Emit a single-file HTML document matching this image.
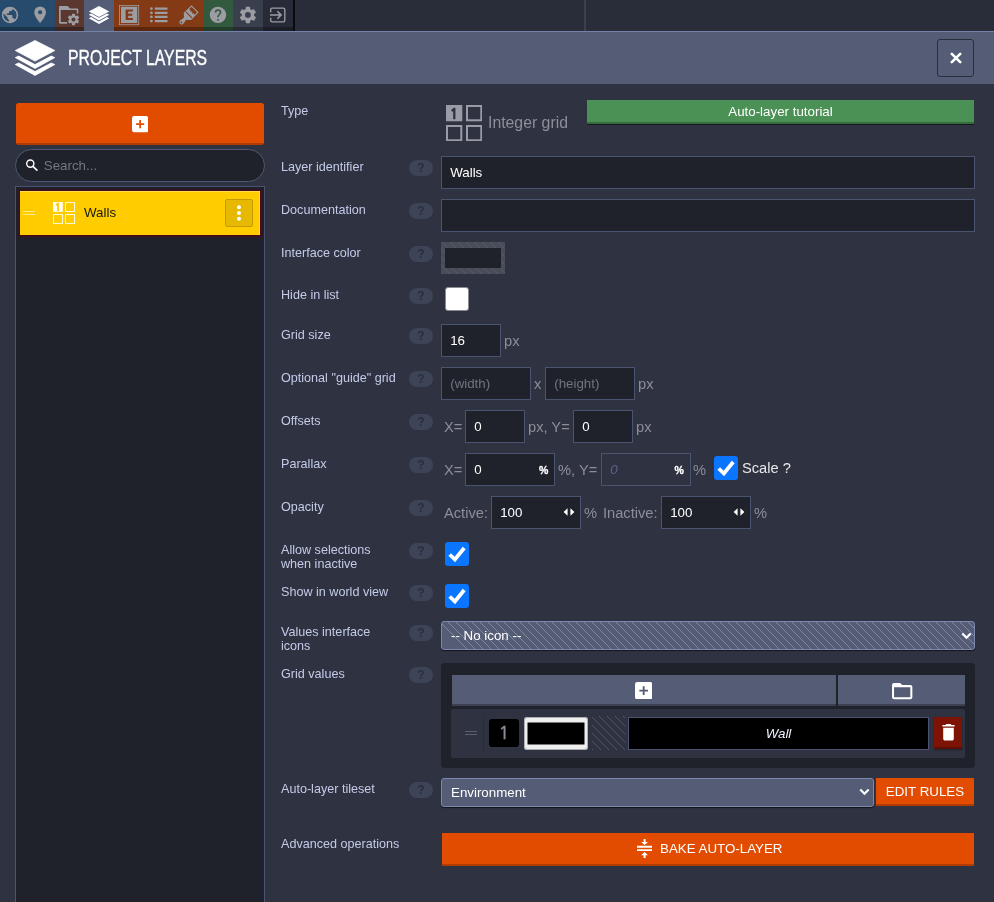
<!DOCTYPE html>
<html lang="en">
<head>
<meta charset="utf-8">
<title>Project layers</title>
<style>
*{box-sizing:border-box;margin:0;padding:0}
html,body{width:994px;height:902px;overflow:hidden;background:#2f3240;font-family:"Liberation Sans",sans-serif;font-size:13px;color:#c3cbe8}
.abs,.abs>*{position:absolute}
#root{position:relative;width:994px;height:902px;overflow:hidden;will-change:transform}
#root>*{position:absolute}

/* top bar */
#bar{left:0;top:0;width:994px;height:31px;background:#292c39}
#bar .b{position:absolute;top:0;height:31px;border-bottom:4px solid rgba(0,0,0,.3)}
#bar .b.on{border-bottom:none;background:#555c75}

/* header */
#head{left:0;top:31px;width:994px;height:53px;background:#555c75;border-top:1px solid #7381ab}
#title{left:68px;top:42.6px;font-size:22.6px;line-height:30px;color:#fff;white-space:nowrap;transform-origin:0 50%;transform:scaleX(.70);-webkit-text-stroke:.35px #fff}
#close{left:937px;top:39px;width:37px;height:38px;border:1px solid #2b2e3b;border-radius:3px;background:#555c75}

/* left */
.obtn{background:#e24c00;border-bottom:2px solid #b23b00;border-radius:2.5px;color:#fff;text-align:center}
#search{left:15px;top:149px;width:250px;height:33px;border:1px solid #4f5875;border-radius:17px;background:#1f222b}
#search span{position:absolute;left:27.8px;top:8px;font-size:13.33px;line-height:16px;color:#76777c}
#list{left:15px;top:186px;width:250px;height:730px;border:1px solid #4a5370;background:#1f222b}
#item{left:20px;top:191px;width:240px;height:44px;background:#ffcc00;box-shadow:inset -1px 1px 0 #ffdf50,0 0 0 1px #4a0815,0 0 2.5px 1.5px rgba(80,8,20,.7)}
#item .nm{position:absolute;left:64px;top:14px;font-size:13.33px;line-height:16px;color:#15161a}
#menu{position:absolute;left:205px;top:8px;width:28px;height:28px;background:#e6b800;border:1px solid #c39c00;border-radius:2px}

/* form */
.lbl{left:281px;font-size:12.6px;line-height:14px;color:#c3cbe8;white-space:nowrap}
.q{left:409px;width:24px;height:16px;border-radius:8px;background:#3e4457;color:#2b2e3b;font-weight:bold;font-size:12px;line-height:16px;text-align:center}
.in{height:33px;background:#1f222b;border:1px solid #4a5370;color:#fff;font-size:13.33px;line-height:31px;padding-left:8.2px;white-space:nowrap}
.in.ph{color:#71747d}
.u{font-size:14.67px;line-height:18px;color:#8c8f99;white-space:nowrap}
.cb{width:24px;height:24px;border-radius:3px;background:#0a75ff}
.cb svg{position:absolute;left:0;top:0;width:24px;height:24px}
.stripe{background-image:repeating-linear-gradient(45deg,rgba(255,255,255,.27) 0,rgba(255,255,255,.27) .7px,transparent .7px,transparent 5.66px)}
.sel{height:29px;border:1px solid #7c88b1;border-radius:3px;background-color:#555c75;color:#fff;font-size:13.33px;line-height:27px;padding-left:9px;box-shadow:0 1px 1px rgba(0,0,0,.6)}
.gbtn{background:#555c75;border-bottom:2px solid #3b4053;height:31px}
</style>
</head>
<body>
<div id="root">

<!-- TOP BAR -->
<div id="bar">
  <div class="b" style="left:0;width:55px;background:#264b6d"></div>
  <div class="b" style="left:55px;width:29px;background:#5a382f"></div>
  <div class="b on" style="left:84px;width:30px"></div>
  <div class="b" style="left:114px;width:90px;background:#833a15"></div>
  <div class="b" style="left:204px;width:29px;background:#325a3e"></div>
  <div class="b" style="left:233px;width:30px;background:#3a3f4e"></div>
  <div class="b" style="left:263px;width:30px;background:#282b37"></div>
  <div style="position:absolute;left:293px;top:0;width:2px;height:31px;background:#0a0a0d"></div>
  <div style="position:absolute;left:584px;top:0;width:2px;height:31px;background:#3c404e"></div>
  <svg style="position:absolute;left:0;top:0;width:300px;height:31px" viewBox="0 0 300 31" fill="#9b9da3">
    <path transform="translate(0.15,5.20) scale(0.8208)" d="M17.9,17.39C17.64,16.59 16.89,16 16,16H15V13A1,1 0 0,0 14,12H8V10H10A1,1 0 0,0 11,9V7H13A2,2 0 0,0 15,5V4.59C17.93,5.77 20,8.64 20,12C20,14.08 19.2,15.97 17.9,17.39M11,19.93C7.05,19.44 4,16.08 4,12C4,11.38 4.08,10.78 4.21,10.21L9,15V16A2,2 0 0,0 11,18M12,2A10,10 0 0,0 2,12A10,10 0 0,0 12,22A10,10 0 0,0 22,12A10,10 0 0,0 12,2Z"/>
    <path transform="translate(30.05,4.70) scale(0.8375)" d="M12,11.5A2.5,2.5 0 0,1 9.5,9A2.5,2.5 0 0,1 12,6.5A2.5,2.5 0 0,1 14.5,9A2.5,2.5 0 0,1 12,11.5M12,2A7,7 0 0,0 5,9C5,14.25 12,22 12,22C12,22 19,14.25 19,9A7,7 0 0,0 12,2Z"/>
    <!-- folder + cog -->
    <path d="M59,7.1C59,6.4 59.5,5.9 60.2,5.9H66.9C67.3,5.9 67.6,6.05 67.9,6.35L70.1,8.6H77.1C77.8,8.6 78.3,9.1 78.3,9.8V13.4H76.7V10.1H60.7V22.1H67.1V23.7H60.2C59.5,23.7 59,23.2 59,22.5Z"/>
    <path transform="translate(66.60,12.55) scale(0.5750)" d="M12,15.5A3.5,3.5 0 0,1 8.5,12A3.5,3.5 0 0,1 12,8.5A3.5,3.5 0 0,1 15.5,12A3.5,3.5 0 0,1 12,15.5M19.43,12.97C19.47,12.65 19.5,12.33 19.5,12C19.5,11.67 19.47,11.34 19.43,11L21.54,9.37C21.73,9.22 21.78,8.95 21.66,8.73L19.66,5.27C19.54,5.05 19.27,4.96 19.05,5.05L16.56,6.05C16.04,5.66 15.5,5.32 14.87,5.07L14.5,2.42C14.46,2.18 14.25,2 14,2H10C9.75,2 9.54,2.18 9.5,2.42L9.13,5.07C8.5,5.32 7.96,5.66 7.44,6.05L4.95,5.05C4.73,4.96 4.46,5.05 4.34,5.27L2.34,8.73C2.21,8.95 2.27,9.22 2.46,9.37L4.57,11C4.53,11.34 4.5,11.67 4.5,12C4.5,12.33 4.53,12.65 4.57,12.97L2.46,14.63C2.27,14.78 2.21,15.05 2.34,15.27L4.34,18.73C4.46,18.95 4.73,19.03 4.95,18.95L7.44,17.94C7.96,18.34 8.5,18.68 9.13,18.93L9.5,21.58C9.54,21.82 9.75,22 10,22H14C14.25,22 14.46,21.82 14.5,21.58L14.87,18.93C15.5,18.67 16.04,18.34 16.56,17.94L19.05,18.95C19.27,19.03 19.54,18.95 19.66,18.73L21.66,15.27C21.78,15.05 21.73,14.78 21.54,14.63L19.43,12.97Z"/>
    <!-- layers (active) -->
    <path fill="#fff" d="M99,5.9L109.3,11.5L99,17.1L88.8,11.5Z M88.8,14.75L91.1,13.5L99,17.85L106.9,13.5L109.3,14.75L99,20.45Z M88.8,18.3L91.1,17.05L99,21.4L106.9,17.05L109.3,18.3L99,24Z"/>
    <!-- entity box -->
    <rect x="119.4" y="5.4" width="19.3" height="19.3" fill="none" stroke="#9b9da3" stroke-width=".8"/>
    <path fill-rule="evenodd" d="M121,6.8H137.2V23.1H121Z M125.6,9.5V20.1H132.9V18H128.2V15.8H132.2V13.7H128.2V11.6H132.9V9.5Z"/>
    <!-- list -->
    <path d="M154.8,7.45H167.5V9.75H154.8Z M154.8,11.65H167.5V13.95H154.8Z M154.8,15.8H167.5V18.1H154.8Z M154.8,19.95H167.5V22.25H154.8Z"/>
    <circle cx="151.4" cy="8.6" r="1.4"/><circle cx="151.4" cy="12.8" r="1.4"/><circle cx="151.4" cy="16.95" r="1.4"/><circle cx="151.4" cy="21.1" r="1.4"/>
    <!-- brush -->
    <g transform="translate(195.05,8.8) rotate(45)">
      <path fill-rule="evenodd" d="M-5.05,0H5.05V10.3C5.05,12.2 1.6,12.4 1.6,14.6L2.35,18.9A2.35,2.35 0 0,1 -2.35,18.9L-1.6,14.6C-1.6,12.4 -5.05,12.2 -5.05,10.3Z M-3.9,1.15V4.9L-2.6,3.9L-1.3,5.3L0,3.9L1.3,5.3L2.6,3.9L3.9,4.9V1.15Z M-3.8,8.1H3.8A.55,.55 0 0,1 3.8,9.2H-3.8A.55,.55 0 0,1 -3.8,8.1Z M0,18.3A.95,.95 0 0,0 0,20.2A.95,.95 0 0,0 0,18.3Z"/>
    </g>
    <path transform="translate(208.15,5.05) scale(0.8208)" d="M15.07,11.25L14.17,12.17C13.45,12.89 13,13.5 13,15H11V14.5C11,13.39 11.45,12.39 12.17,11.67L13.41,10.41C13.78,10.05 14,9.55 14,9C14,7.89 13.1,7 12,7A2,2 0 0,0 10,9H8A4,4 0 0,1 12,5A4,4 0 0,1 16,9C16,9.88 15.64,10.67 15.07,11.25M13,19H11V17H13M12,2A10,10 0 0,0 2,12A10,10 0 0,0 12,22A10,10 0 0,0 22,12C22,6.47 17.5,2 12,2Z"/>
    <path transform="translate(238.05,5.10) scale(0.8208)" d="M12,15.5A3.5,3.5 0 0,1 8.5,12A3.5,3.5 0 0,1 12,8.5A3.5,3.5 0 0,1 15.5,12A3.5,3.5 0 0,1 12,15.5M19.43,12.97C19.47,12.65 19.5,12.33 19.5,12C19.5,11.67 19.47,11.34 19.43,11L21.54,9.37C21.73,9.22 21.78,8.95 21.66,8.73L19.66,5.27C19.54,5.05 19.27,4.96 19.05,5.05L16.56,6.05C16.04,5.66 15.5,5.32 14.87,5.07L14.5,2.42C14.46,2.18 14.25,2 14,2H10C9.75,2 9.54,2.18 9.5,2.42L9.13,5.07C8.5,5.32 7.96,5.66 7.44,6.05L4.95,5.05C4.73,4.96 4.46,5.05 4.34,5.27L2.34,8.73C2.21,8.95 2.27,9.22 2.46,9.37L4.57,11C4.53,11.34 4.5,11.67 4.5,12C4.5,12.33 4.53,12.65 4.57,12.97L2.46,14.63C2.27,14.78 2.21,15.05 2.34,15.27L4.34,18.73C4.46,18.95 4.73,19.03 4.95,18.95L7.44,17.94C7.96,18.34 8.5,18.68 9.13,18.93L9.5,21.58C9.54,21.82 9.75,22 10,22H14C14.25,22 14.46,21.82 14.5,21.58L14.87,18.93C15.5,18.67 16.04,18.34 16.56,17.94L19.05,18.95C19.27,19.03 19.54,18.95 19.66,18.73L21.66,15.27C21.78,15.05 21.73,14.78 21.54,14.63L19.43,12.97Z"/>
    <!-- exit -->
    <path fill="none" stroke="#9b9da3" stroke-width="1.35" d="M270.7,12.2V9.4C270.7,8.6 271.3,8.05 272.1,8.05H283.4C284.2,8.05 284.8,8.6 284.8,9.4V20.5C284.8,21.3 284.2,21.85 283.4,21.85H272.1C271.3,21.85 270.7,21.3 270.7,20.5V17.7"/>
    <path fill="none" stroke="#9b9da3" stroke-width="1.6" d="M270,14.95H280.8M277.3,11.2L281.1,14.95L277.3,18.7"/>
  </svg>
</div>

<!-- HEADER -->
<div id="head"></div>
<svg style="left:14px;top:39px;width:42px;height:38px" viewBox="0 0 42 38"><path fill="#fff" stroke="#fff" stroke-width=".8" stroke-linejoin="round" d="M21,1.5 L40.8,11.5 L21,22.1 L1.3,11.5Z M4.8,17.1 L21,25.6 L37.2,17.1 L40.8,18.6 L21,29.4 L1.3,18.6Z M4.8,24 L21,32.5 L37.2,24 L40.8,25.5 L21,36.4 L1.3,25.5Z"/></svg>
<div id="title">PROJECT LAYERS</div>
<div id="close"><svg style="position:absolute;left:11.5px;top:12px;width:12px;height:12px" viewBox="0 0 12 12"><path d="M1.8,1.8L10.2,10.2M10.2,1.8L1.8,10.2" stroke="#fff" stroke-width="2.6" stroke-linecap="round"/></svg></div>

<!-- LEFT PANEL -->
<div class="obtn" style="left:16px;top:103px;width:248px;height:42px"><svg style="position:absolute;left:116px;top:13.4px;width:16.3px;height:16.3px" viewBox="0 0 16 16"><rect width="16" height="16" rx="2.2" fill="#fff"/><path d="M8,4V12M4,8H12" stroke="#e24c00" stroke-width="1.7"/></svg></div>
<div id="search"><svg style="position:absolute;left:9px;top:9px;width:13px;height:13px" viewBox="0 0 13 13"><circle cx="5.3" cy="4.6" r="3.6" fill="none" stroke="#fff" stroke-width="1.4"/><path d="M8,7.4L11.9,11.1" stroke="#fff" stroke-width="1.6" stroke-linecap="round"/></svg><span>Search...</span></div>
<div id="list"></div>
<div id="item">
  <div style="position:absolute;left:3px;top:19.5px;width:12px;height:1.2px;background:#ffe88a"></div>
  <div style="position:absolute;left:3px;top:23.3px;width:12px;height:1.2px;background:#ffe88a"></div>
  <svg style="position:absolute;left:33px;top:11px;width:22px;height:22px" viewBox="0 0 22 22"><rect x="0" y="0" width="9.8" height="9.8" fill="#fffdf2"/><text x="4.8" y="9" font-family="NanumGothic, Liberation Sans, sans-serif" font-size="9.6" font-weight="bold" text-anchor="middle" fill="#ffc800" stroke="#ffc800" stroke-width=".6">1</text><g fill="none" stroke="#fff8d6" stroke-width="1"><rect x="12.5" y=".5" width="9" height="9"/><rect x=".5" y="12.5" width="9" height="9"/><rect x="12.5" y="12.5" width="9" height="9"/></g></svg>
  <div class="nm">Walls</div>
  <div id="menu"><svg style="position:absolute;left:0;top:0;width:26px;height:26px" viewBox="0 0 26 26" fill="#fff"><circle cx="13" cy="7.3" r="2"/><circle cx="13" cy="13" r="2"/><circle cx="13" cy="18.8" r="2"/></svg></div>
</div>

<!-- FORM -->
<div class="lbl" style="top:104px">Type</div>
<svg style="left:445.9px;top:104.8px;width:36.3px;height:36.3px" viewBox="0 0 36.3 36.3"><rect x="0" y="0" width="16.3" height="16.3" fill="#9a9ca5"/><text x="8.1" y="13.6" font-family="NanumGothic, Liberation Sans, sans-serif" font-size="14" font-weight="bold" text-anchor="middle" fill="#2f3240" stroke="#2f3240" stroke-width=".7">1</text><g fill="none" stroke="#9a9ca5" stroke-width="2"><rect x="21" y="1" width="14.3" height="14.3"/><rect x="1" y="21" width="14.3" height="14.3"/><rect x="21" y="21" width="14.3" height="14.3"/></g></svg>
<div style="left:488px;top:113.2px;font-size:17px;line-height:20px;color:#8c8f99;white-space:nowrap;transform-origin:0 50%;transform:scaleX(.93)">Integer grid</div>
<div style="left:587px;top:100px;width:387px;height:23.5px;background:#4b9156;border-bottom:2px solid #356b3e;box-shadow:0 1px 0 #15171d;color:#fff;font-size:13.33px;line-height:23px;text-align:center">Auto-layer tutorial</div>

<div class="lbl" style="top:160px">Layer identifier</div><div class="q" style="top:160px">?</div>
<div class="in" style="left:441px;top:156px;width:534px">Walls</div>

<div class="lbl" style="top:203px">Documentation</div><div class="q" style="top:203px">?</div>
<div class="in" style="left:441px;top:199px;width:534px"></div>

<div class="lbl" style="top:246px">Interface color</div><div class="q" style="top:246px">?</div>
<div style="left:441px;top:242px;width:64px;height:32px;background-color:#494d5a;background-image:repeating-linear-gradient(45deg,rgba(255,255,255,.08) 0,rgba(255,255,255,.08) .9px,transparent .9px,transparent 5.66px)"></div>
<div style="left:445px;top:248px;width:56px;height:20px;background:#1f222b"></div>

<div class="lbl" style="top:288px">Hide in list</div><div class="q" style="top:288px">?</div>
<div style="left:445px;top:287px;width:24px;height:24px;background:#fff;border:1px solid #8a8c92;border-radius:3px"></div>

<div class="lbl" style="top:328px">Grid size</div><div class="q" style="top:328px">?</div>
<div class="in" style="left:441px;top:324px;width:60px">16</div>
<div class="u" style="left:504px;top:332px">px</div>

<div class="lbl" style="top:371px">Optional "guide" grid</div><div class="q" style="top:371px">?</div>
<div class="in ph" style="left:441px;top:367px;width:90px">(width)</div>
<div class="u" style="left:534px;top:375px">x</div>
<div class="in ph" style="left:545px;top:367px;width:90px">(height)</div>
<div class="u" style="left:638px;top:375px">px</div>

<div class="lbl" style="top:414px">Offsets</div><div class="q" style="top:414px">?</div>
<div class="u" style="left:444px;top:418px">X=</div>
<div class="in" style="left:465px;top:410px;width:60px">0</div>
<div class="u" style="left:528px;top:418px">px, Y=</div>
<div class="in" style="left:573px;top:410px;width:60px">0</div>
<div class="u" style="left:636px;top:418px">px</div>

<div class="lbl" style="top:457px">Parallax</div><div class="q" style="top:457px">?</div>
<div class="u" style="left:444px;top:461px">X=</div>
<div class="in" style="left:465px;top:453px;width:90px">0<span style="position:absolute;left:73px;top:.5px;font-size:10.5px;font-weight:bold;-webkit-text-stroke:.3px #fff">%</span></div>
<div class="u" style="left:558px;top:461px">%, Y=</div>
<div class="in" style="left:601px;top:453px;width:90px;background:transparent;color:#59638a;font-style:italic">0<span style="position:absolute;left:72.5px;top:.5px;font-size:10.5px;font-weight:bold;font-style:normal;color:#fff;-webkit-text-stroke:.3px #fff">%</span></div>
<div class="u" style="left:693px;top:461px">%</div>
<div class="cb" style="left:714px;top:456px"><svg viewBox="0 0 24 24"><path d="M4.7,12.5L9.9,17.5L19.2,6" fill="none" stroke="#fff" stroke-width="3.8"/></svg></div>
<div style="left:742px;top:459px;font-size:14.67px;line-height:18px;color:#e8e8ea;white-space:nowrap">Scale ?</div>

<div class="lbl" style="top:500px">Opacity</div><div class="q" style="top:500px">?</div>
<div class="u" style="left:444px;top:504px">Active:</div>
<div class="in" style="left:491px;top:496px;width:90px">100<svg style="position:absolute;left:71.4px;top:11.4px;width:12px;height:8px" viewBox="0 0 12 8" fill="#fff"><path d="M4.6,.2V7.8L.6,4Z M7.4,.2V7.8L11.4,4Z"/></svg></div>
<div class="u" style="left:584px;top:504px">%</div>
<div class="u" style="left:603px;top:504px">Inactive:</div>
<div class="in" style="left:661px;top:496px;width:90px">100<svg style="position:absolute;left:71.4px;top:11.4px;width:12px;height:8px" viewBox="0 0 12 8" fill="#fff"><path d="M4.6,.2V7.8L.6,4Z M7.4,.2V7.8L11.4,4Z"/></svg></div>
<div class="u" style="left:754px;top:504px">%</div>

<div class="lbl" style="top:543px">Allow selections<br>when inactive</div><div class="q" style="top:543px">?</div>
<div class="cb" style="left:445px;top:542px"><svg viewBox="0 0 24 24"><path d="M4.7,12.5L9.9,17.5L19.2,6" fill="none" stroke="#fff" stroke-width="3.8"/></svg></div>

<div class="lbl" style="top:585px">Show in world view</div><div class="q" style="top:585px">?</div>
<div class="cb" style="left:445px;top:584px"><svg viewBox="0 0 24 24"><path d="M4.7,12.5L9.9,17.5L19.2,6" fill="none" stroke="#fff" stroke-width="3.8"/></svg></div>

<div class="lbl" style="top:625px">Values interface<br>icons</div><div class="q" style="top:625px">?</div>
<div class="sel stripe" style="left:441px;top:621px;width:534px">-- No icon --<svg style="position:absolute;left:518.6px;top:9.5px;width:11px;height:8px" viewBox="0 0 11 8"><path d="M1.3,1.5L5.5,5.8L9.7,1.5" fill="none" stroke="#fff" stroke-width="2.2"/></svg></div>

<div class="lbl" style="top:667px">Grid values</div><div class="q" style="top:667px">?</div>
<div style="left:441px;top:663px;width:534px;height:105px;background:#1f222b;border-radius:4px"></div>
<div class="gbtn" style="left:452px;top:675px;width:384px"><svg style="position:absolute;left:183px;top:6.9px;width:17.4px;height:17.4px" viewBox="0 0 16 16"><rect width="16" height="16" rx="2.2" fill="#fff"/><path d="M8,4V12M4,8H12" stroke="#555c75" stroke-width="1.7"/></svg></div>
<div class="gbtn" style="left:838px;top:675px;width:127px"><svg style="position:absolute;left:51.6px;top:3.9px;width:24.4px;height:24.4px" viewBox="0 0 24 24" fill="#fff"><path d="M20,18H4V8H20M20,6H12L10,4H4C2.89,4 2,4.89 2,6V18A2,2 0 0,0 4,20H20A2,2 0 0,0 22,18V8C22,6.89 21.1,6 20,6Z"/></svg></div>
<div style="left:451px;top:709px;width:514px;height:48.5px;background:#2f3240;border-radius:2px"></div>
<div style="left:465px;top:730.7px;width:12px;height:1.2px;background:#5a5f70"></div>
<div style="left:465px;top:734.3px;width:12px;height:1.2px;background:#5a5f70"></div>
<div style="left:483px;top:714px;width:1px;height:38px;background:#2a2d39"></div>
<div style="left:489px;top:719px;width:30px;height:28px;background:#000;border-radius:3px;color:#8a8d96;font-family:NanumGothic,'Liberation Sans',sans-serif;font-size:18px;line-height:29px;-webkit-text-stroke:.55px #8a8d96;text-align:center">1</div>
<div style="left:524px;top:717px;width:64px;height:33px;background:#000;border:solid #efefef;border-width:5px 3px;box-shadow:inset 0 0 0 .5px #efefef;outline:1px solid rgba(120,122,130,.55);outline-offset:-1px;border-radius:3px"></div>
<div style="left:592px;top:716px;width:33px;height:34px;background-image:repeating-linear-gradient(45deg,#50556400 0,#505564 .1px,#505564 1px,transparent 1.1px,transparent 5.66px)"></div>
<div class="in" style="left:628px;top:717px;width:301px;background:#000;text-align:center;padding-left:0;font-style:italic;color:#eef1ff">Wall</div>
<div style="left:934px;top:717px;width:28px;height:32px;background:#7d1305;border-bottom:2px solid #5c0d04;box-shadow:0 1px 2px rgba(0,0,0,.35)"><svg style="position:absolute;left:7.6px;top:7.3px;width:13px;height:17px" viewBox="0 0 13 17" fill="#fff"><path d="M4.3,0H8.7L9.4,.9H12.6V2.6H.4V.9H3.6Z M1.2,3.8H11.8V14.8C11.8,15.9 11,16.6 10,16.6H3C2,16.6 1.2,15.9 1.2,14.8Z"/></svg></div>

<div class="lbl" style="top:782px">Auto-layer tileset</div><div class="q" style="top:782px">?</div>
<div class="sel" style="left:441px;top:778px;width:433px">Environment<svg style="position:absolute;left:417.3px;top:8.8px;width:11px;height:8px" viewBox="0 0 11 8"><path d="M1.3,1.5L5.5,5.8L9.7,1.5" fill="none" stroke="#fff" stroke-width="2.2"/></svg></div>
<div class="obtn" style="left:876px;top:778px;width:98px;height:28px;border-radius:0;font-size:13.33px;line-height:27.4px">EDIT RULES</div>

<div class="lbl" style="top:837px">Advanced operations</div>
<div class="obtn" style="left:442px;top:833px;width:532px;height:33px;border-radius:0;font-size:13.33px;line-height:31px;text-align:left;padding-left:218px"><svg style="position:absolute;left:195.3px;top:5.9px;width:15.2px;height:19.2px" viewBox="0 0 16 20" fill="#fff"><path d="M0,7.1H16V9.1H0Z M0,10.6H16V12.6H0Z M7,0H9V3H11.6L8,6.2L4.4,3H7Z M7,20H9V17H11.6L8,13.6L4.4,17H7Z"/></svg>BAKE AUTO-LAYER</div>

</div>
</body>
</html>
